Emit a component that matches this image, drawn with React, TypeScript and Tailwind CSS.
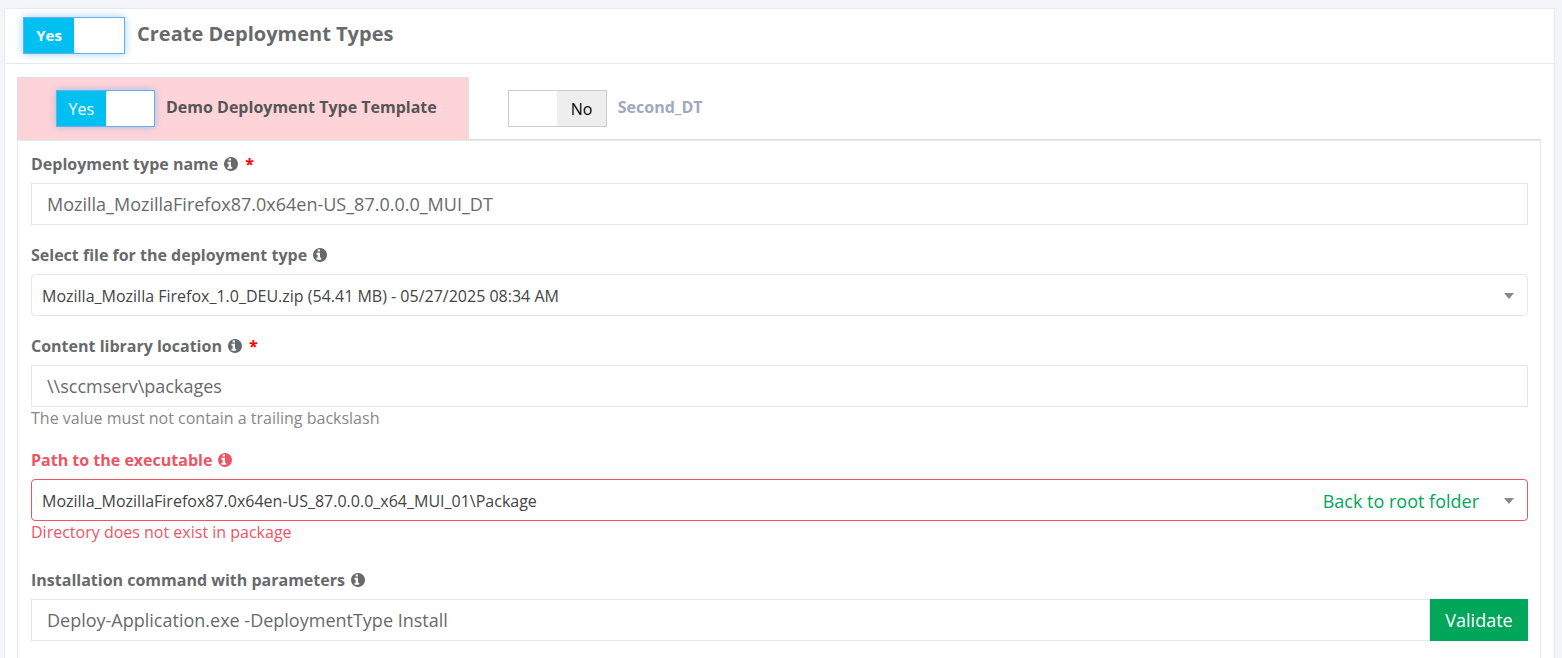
import { useState } from "react"
import type { ReactNode } from "react"
import { clsx } from "clsx"

const inputClass =
  "h-[42px] w-full min-w-0 border border-[#e5e6e7] bg-white px-[15px] text-[18px] text-[#676a6c] outline-none"

const InfoIcon = () => (
  <svg viewBox="128 128 1536 1536" className="ml-1.5 size-[14px] fill-current" aria-hidden="true">
    <path d="M1024 1376v-160q0-14-9-23t-23-9h-96v-512q0-14-9-23t-23-9h-320q-14 0-23 9t-9 23v160q0 14 9 23t23 9h96v320h-96q-14 0-23 9t-9 23v160q0 14 9 23t23 9h448q14 0 23-9t9-23zM896 480v-160q0-14-9-23t-23-9h-192q-14 0-23 9t-9 23v160q0 14 9 23t23 9h192q14 0 23-9t9-23zM1664 896q0 209-103 385.5t-279.5 279.5-385.5 103-385.5-103-279.5-279.5-103-385.5 103-385.5 279.5-279.5 385.5-103 385.5 103 279.5 279.5 103 385.5z" />
  </svg>
)

const Toggle = ({
  id,
  checked,
  onChange,
  large,
}: {
  id: string
  checked: boolean
  onChange: (value: boolean) => void
  large?: boolean
}) => (
  <span
    className={clsx(
      "relative flex h-[37px] shrink-0 border bg-white",
      large ? "w-[102px] text-[15px] font-bold" : "w-[99px] text-[16px]",
      checked ? "border-[#66afe9] shadow-[0_0_8px_rgba(102,175,233,0.6)]" : "border-[#cccccc]",
    )}
  >
    <input
      id={id}
      type="checkbox"
      checked={checked}
      onChange={(e) => onChange(e.target.checked)}
      className="absolute inset-0 m-0 size-full cursor-pointer appearance-none"
    />
    <span className={clsx("flex w-1/2 items-center justify-center", checked && "bg-[#00c0f2] text-white")}>
      {checked && "Yes"}
    </span>
    <span className={clsx("flex w-1/2 items-center justify-center", !checked && "bg-[#eeeeee] text-black")}>
      {!checked && "No"}
    </span>
  </span>
)

const Field = ({
  id,
  label,
  required,
  error,
  hint,
  children,
}: {
  id: string
  label: string
  required?: boolean
  error?: string
  hint?: string
  children: ReactNode
}) => (
  <div className={error ? "mb-6" : "mb-[18px]"}>
    <div className={clsx("mb-[7px] flex h-6 items-center", error ? "text-[#ed5565]" : "text-[#676a6c]")}>
      <label htmlFor={id} className="text-[16px] font-bold">
        {label}
      </label>
      <InfoIcon />
      {required && <span className="ml-[7px] text-[16px] font-bold text-[#ff0000]">*</span>}
    </div>
    {children}
    {(error || hint) && (
      <p className={clsx("text-[16px] leading-[23px]", error ? "text-[#ed5565]" : "text-[#888888]")}>
        {error || hint}
      </p>
    )}
  </div>
)

const SelectBox = ({
  id,
  value,
  invalid,
  action,
}: {
  id: string
  value: string
  invalid?: boolean
  action?: string
}) => (
  <div className="relative">
    <select
      id={id}
      defaultValue={value}
      className={clsx(
        "block h-[42px] w-full appearance-none rounded border bg-white pt-0.5 pr-12 pl-[10px] text-[16px] text-[#444444] outline-none",
        invalid ? "border-[#ed5565]" : "border-[#e7e7e7]",
      )}
    >
      <option>{value}</option>
    </select>
    {action && (
      <button type="button" className="absolute inset-y-0 right-[49px] pt-0.5 text-[18px] text-[#00a65a]">
        {action}
      </button>
    )}
    <svg
      viewBox="0 0 10 6"
      className="pointer-events-none absolute top-[19px] right-[14px] h-[6px] w-[10px] fill-[#888888]"
    >
      <path d="M0 0h10L5 6z" />
    </svg>
  </div>
)

const App = () => {
  const [create, setCreate] = useState(true)
  const [demo, setDemo] = useState(true)
  const [second, setSecond] = useState(false)

  return (
    <div className="flex min-h-screen flex-col bg-[#f3f5fa] pt-2 pr-[7px] pl-1 font-['Open_Sans',sans-serif]">
      <section className="flex flex-1 flex-col border border-b-0 border-[#e7eaec] bg-white">
        <header className="flex h-[55px] items-center gap-3 border-b border-[#e7eaec] px-[18px] pb-px">
          <Toggle id="create" large checked={create} onChange={setCreate} />
          <label htmlFor="create" className="pb-[3px] text-[20px] font-bold text-[#676a6c]">
            Create Deployment Types
          </label>
        </header>

        <div className="flex flex-1 flex-col pt-[13px] pr-[13px] pl-3">
          <div className="flex border-b border-[#dddddd]">
            <div className="-mb-px bg-[#ffd4d9] pr-0.5">
              <div className="flex h-[63px] items-center gap-[11px] rounded-t border border-b-0 border-[#dddddd] pr-[29px] pb-px pl-[38px]">
                <Toggle id="demo" checked={demo} onChange={setDemo} />
                <label htmlFor="demo" className="pb-[3px] text-[16px] font-bold text-[#555555]">
                  Demo Deployment Type Template
                </label>
              </div>
            </div>
            <div className="-mb-px flex h-[63px] items-center gap-[11px] px-[39px]">
              <Toggle id="second" checked={second} onChange={setSecond} />
              <label htmlFor="second" className="pb-[3px] text-[16px] font-bold text-[#9fa8be]">
                Second_DT
              </label>
            </div>
          </div>

          <form className="flex-1 border-x border-t border-[#e7eaec] pt-[11px] pr-3 pl-[13px]">
            <Field id="name" label="Deployment type name" required>
              <input
                id="name"
                type="text"
                defaultValue="Mozilla_MozillaFirefox87.0x64en-US_87.0.0.0_MUI_DT"
                className={clsx(inputClass, "block")}
              />
            </Field>
            <Field id="file" label="Select file for the deployment type">
              <SelectBox id="file" value="Mozilla_Mozilla Firefox_1.0_DEU.zip (54.41 MB) - 05/27/2025 08:34 AM" />
            </Field>
            <Field
              id="library"
              label="Content library location"
              required
              hint="The value must not contain a trailing backslash"
            >
              <input
                id="library"
                type="text"
                defaultValue="\\sccmserv\packages"
                className={clsx(inputClass, "block")}
              />
            </Field>
            <Field id="path" label="Path to the executable" error="Directory does not exist in package">
              <SelectBox
                id="path"
                invalid
                value="Mozilla_MozillaFirefox87.0x64en-US_87.0.0.0_x64_MUI_01\Package"
                action="Back to root folder"
              />
            </Field>
            <Field id="command" label="Installation command with parameters">
              <div className="flex">
                <input
                  id="command"
                  type="text"
                  defaultValue="Deploy-Application.exe -DeploymentType Install"
                  className={clsx(inputClass, "flex-1")}
                />
                <button type="button" className="w-[98px] shrink-0 bg-[#00a65a] text-[18px] text-white">
                  Validate
                </button>
              </div>
            </Field>
          </form>
        </div>
      </section>
    </div>
  )
}

export default App
